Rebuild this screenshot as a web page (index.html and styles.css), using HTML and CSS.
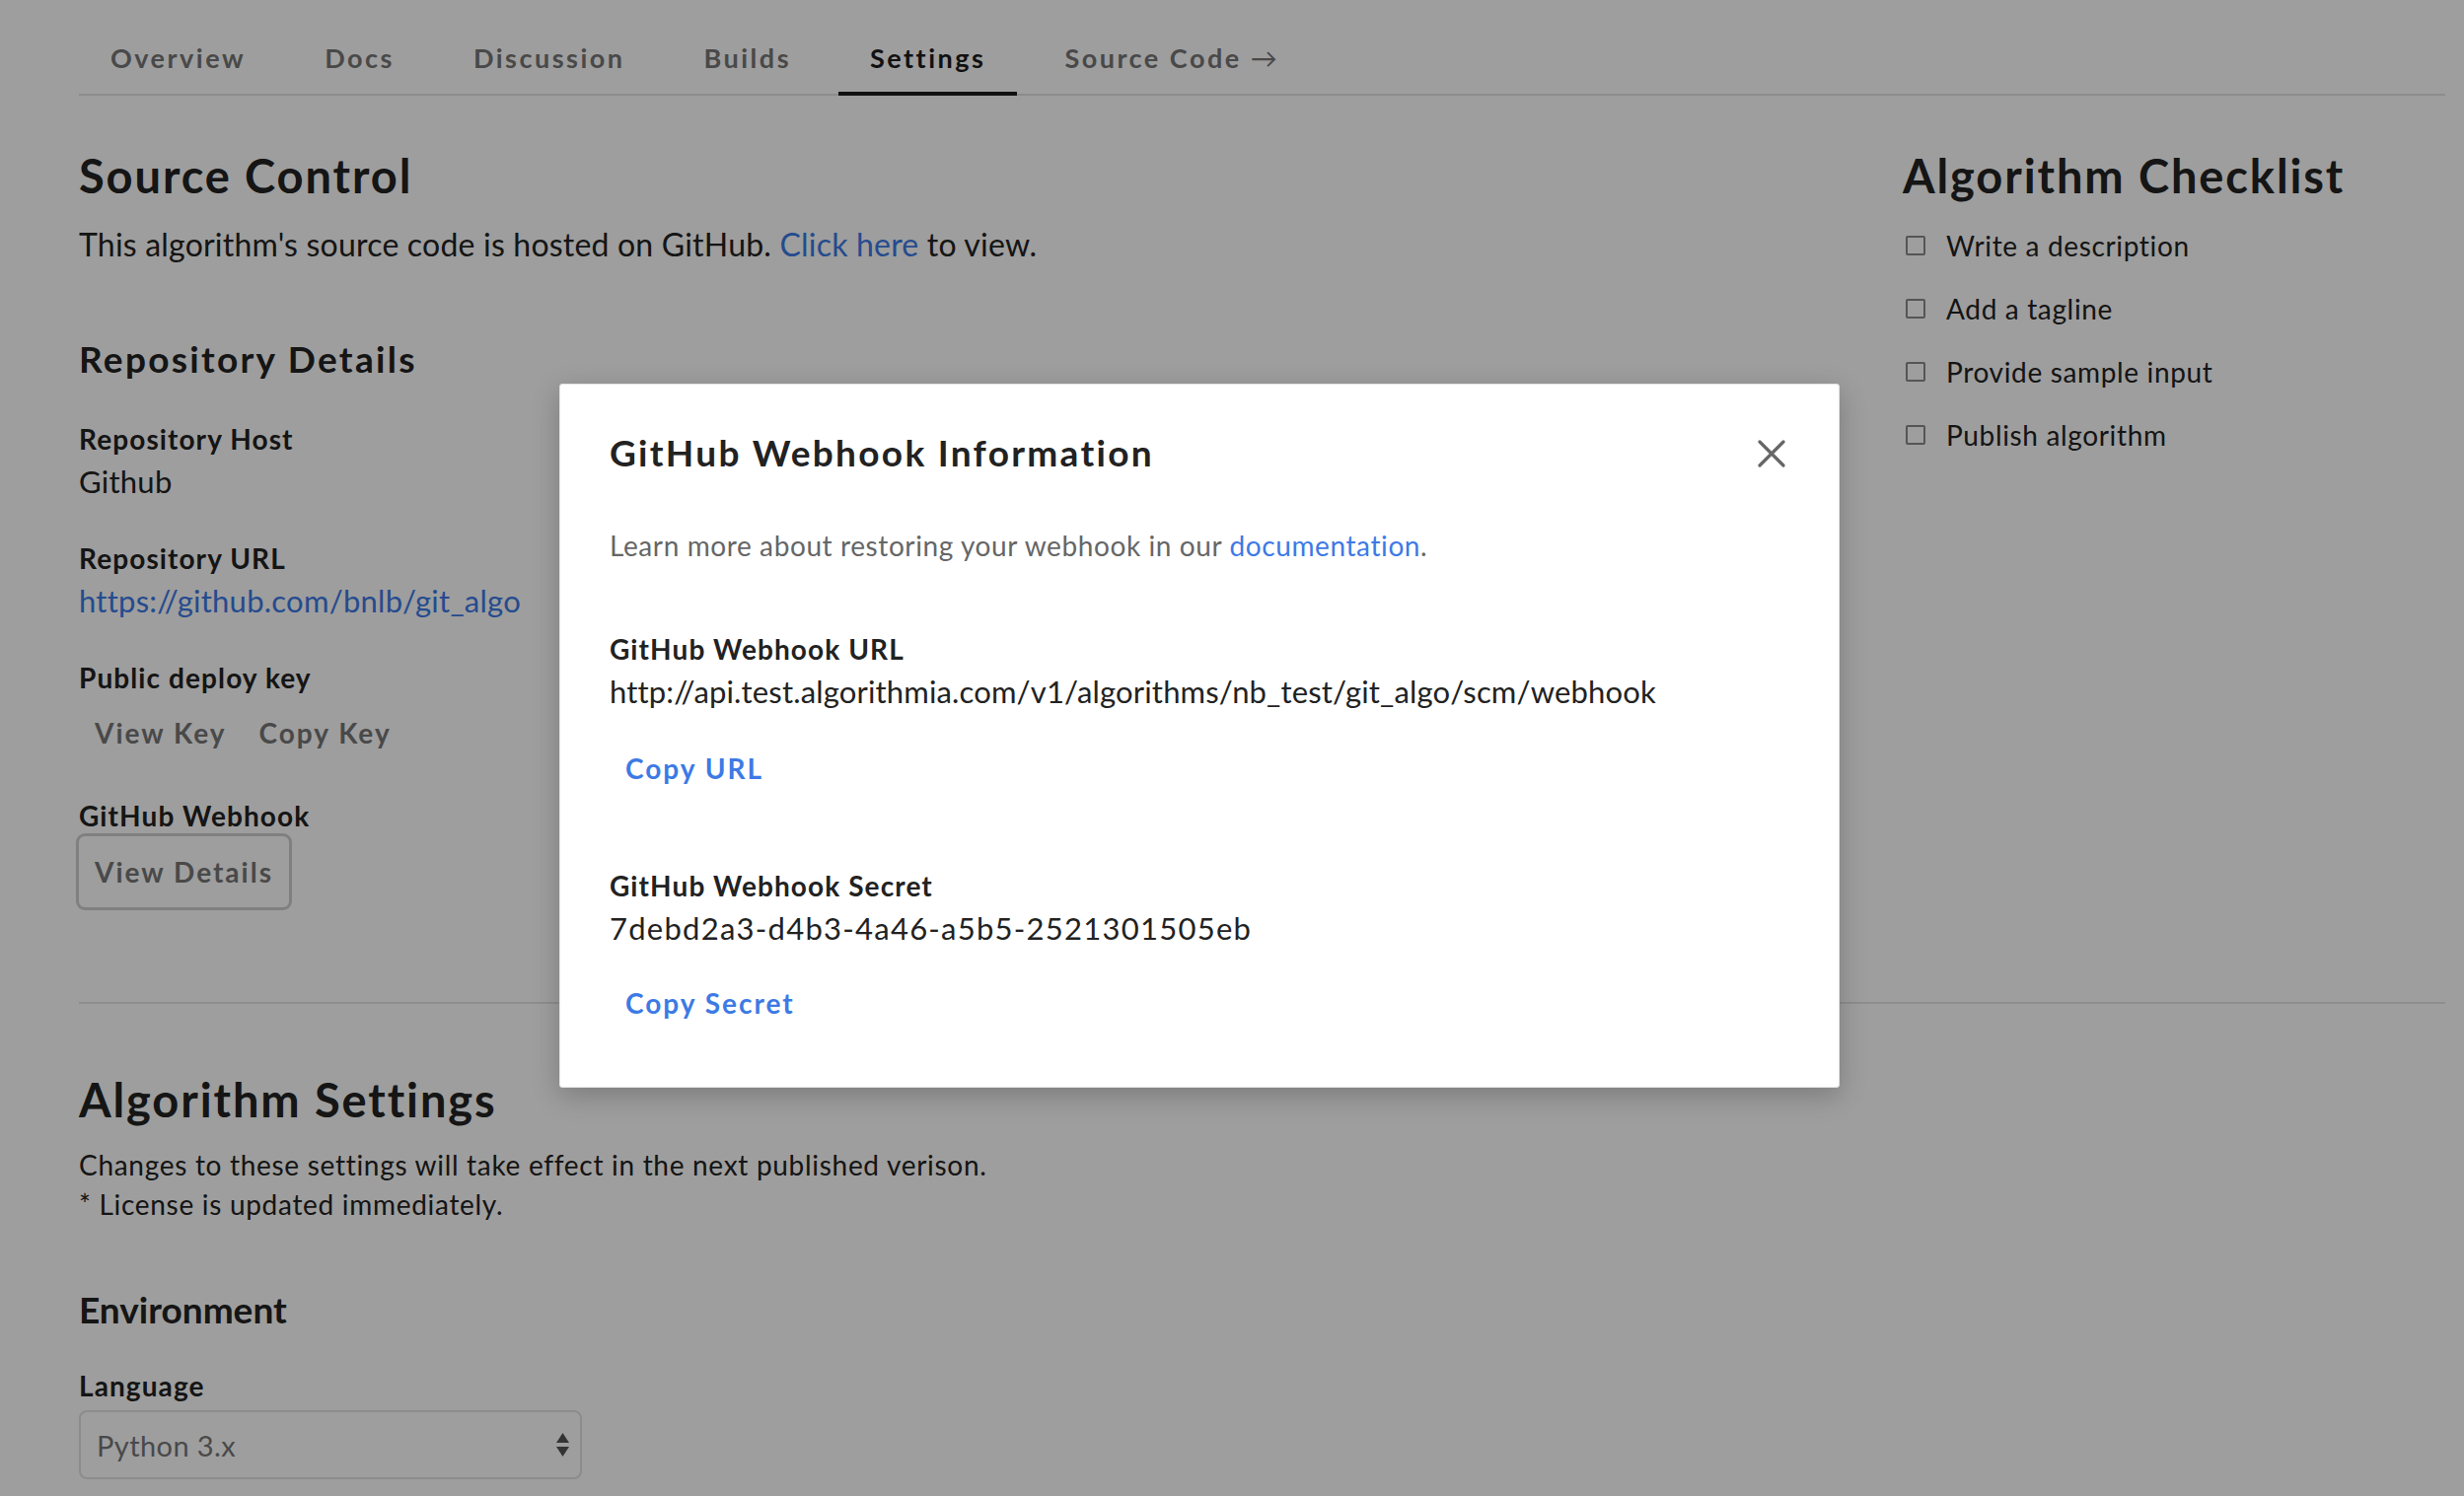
FILE: index.html
```html
<!DOCTYPE html>
<html lang="en">
<head>
<meta charset="utf-8">
<title>Settings</title>
<link rel="stylesheet" href="styles.css">
</head>
<body>
<div class="page">
  <nav class="tabs">
    <a class="tab">Overview</a>
    <a class="tab">Docs</a>
    <a class="tab">Discussion</a>
    <a class="tab">Builds</a>
    <a class="tab active">Settings</a>
    <a class="tab">Source Code <span class="arrow">&#8594;</span></a>
  </nav>

  <div class="top-row">
    <section class="main-col">
      <h2 class="h-xl first">Source Control</h2>
      <p class="lead">This algorithm's source code is hosted on GitHub. <a class="link">Click here</a> to view.</p>

      <h3 class="h-lg repo-title">Repository Details</h3>

      <div class="field">
        <div class="label">Repository Host</div>
        <div class="value">Github</div>
      </div>
      <div class="field">
        <div class="label">Repository URL</div>
        <div class="value"><a class="link">https://github.com/bnlb/git_algo</a></div>
      </div>
      <div class="field">
        <div class="label">Public deploy key</div>
        <div class="btn-row">
          <button class="btn">View Key</button>
          <button class="btn">Copy Key</button>
        </div>
      </div>
      <div class="field webhook">
        <div class="label">GitHub Webhook</div>
        <div class="btn-row">
          <button class="btn focused">View Details</button>
        </div>
      </div>
    </section>

    <aside class="side-col">
      <h2 class="h-xl first">Algorithm Checklist</h2>
      <ul class="checklist">
        <li><span class="box"></span>Write a description</li>
        <li><span class="box"></span>Add a tagline</li>
        <li><span class="box"></span>Provide sample input</li>
        <li><span class="box"></span>Publish algorithm</li>
      </ul>
    </aside>
  </div>

  <hr class="divider">

  <section class="settings">
    <h2 class="h-xl">Algorithm Settings</h2>
    <p class="note">Changes to these settings will take effect in the next published verison.<br>* License is updated immediately.</p>
    <h3 class="h-lg env-title">Environment</h3>
    <div class="label lang-label">Language</div>
    <div class="select">
      <span>Python 3.x</span>
      <svg class="updown" width="13" height="24" viewBox="0 0 13 24"><path d="M6.5 0 L13 10 L0 10 Z" fill="#555"/><path d="M0 14 L13 14 L6.5 24 Z" fill="#555"/></svg>
    </div>
  </section>
</div>

<div class="overlay"></div>

<div class="modal">
  <div class="modal-head">
    <h2 class="modal-title">GitHub Webhook Information</h2>
    <svg class="close" width="28" height="28" viewBox="0 0 28 28"><path d="M2 2 L26 26 M26 2 L2 26" stroke="#666" stroke-width="3.2" stroke-linecap="round"/></svg>
  </div>
  <p class="modal-intro">Learn more about restoring your webhook in our <a class="link">documentation</a>.</p>

  <div class="modal-field">
    <div class="label">GitHub Webhook URL</div>
    <div class="value url">http://api.test.algorithmia.com/v1/algorithms/nb_test/git_algo/scm/webhook</div>
    <button class="btn blue">Copy URL</button>
  </div>

  <div class="modal-field second">
    <div class="label">GitHub Webhook Secret</div>
    <div class="value secret">7debd2a3-d4b3-4a46-a5b5-2521301505eb</div>
    <button class="btn blue">Copy Secret</button>
  </div>
</div>
</body>
</html>
```

FILE: styles.css
```css
html, body {
  margin: 0;
  padding: 0;
  background: #ffffff;
}

body {
  font-family: Lato, "Open Sans", sans-serif;
  color: #222222;
  width: 2498px;
  height: 1517px;
  overflow: hidden;
  position: relative;
}

.page {
  margin-left: 80px;
  width: 2399px;
}

/* Tabs */
.tabs {
  display: flex;
  padding-top: 45px;
  border-bottom: 2px solid #e2e2e2;
}

.tab {
  font-size: 27px;
  font-weight: 700;
  letter-spacing: 2.5px;
  line-height: 28px;
  color: #767676;
  padding: 0 32px 20px;
  margin-right: 16px;
  margin-bottom: -2px;
  border-bottom: 4px solid transparent;
  white-space: nowrap;
}

.tab.active {
  color: #1c1c1c;
  border-bottom-color: #1c1c1c;
}

.arrow {
  font-weight: 400;
  letter-spacing: 0;
}

/* Layout */
.top-row {
  display: flex;
}

.main-col {
  flex: 1;
}

.side-col {
  width: 550px;
}

.h-xl {
  font-size: 47px;
  font-weight: 700;
  letter-spacing: 1.9px;
  line-height: 54px;
  margin: 0;
  color: #222;
}

.h-xl.first {
  margin-top: 54px;
}

.h-lg {
  font-size: 37px;
  font-weight: 700;
  line-height: 44px;
  margin: 0;
  color: #222;
}

.lead {
  font-size: 32px;
  letter-spacing: 0.2px;
  line-height: 44px;
  margin: 21px 0 0;
}

.link {
  color: #3d7ae5;
  text-decoration: none;
}

.repo-title {
  margin-top: 72px;
  letter-spacing: 2.3px;
}

.label {
  font-size: 28px;
  font-weight: 700;
  letter-spacing: 1.1px;
  line-height: 36px;
  color: #222;
}

.value {
  font-size: 31px;
  letter-spacing: 0.25px;
  line-height: 40px;
  margin-top: 5px;
}

.value.url {
  letter-spacing: 0.16px;
}

.value.secret {
  letter-spacing: 1.25px;
}

.field {
  margin-top: 40px;
}

.field:first-of-type {
  margin-top: 41px;
}

.btn-row {
  display: flex;
  margin-top: 2px;
}

.btn {
  font-family: inherit;
  font-size: 28px;
  font-weight: 700;
  letter-spacing: 2px;
  line-height: 72px;
  height: 72px;
  padding: 0 16px;
  border: 0;
  border-radius: 6px;
  background: transparent;
  color: #777;
  margin-right: 1px;
}

.btn.focused {
  box-shadow: 0 0 0 3px #cfcfcf;
}

.webhook {
  margin-top: 30px;
}

.webhook .btn-row {
  margin-top: 3px;
}

/* Checklist */
.checklist {
  list-style: none;
  margin: 12px 0 0;
  padding: 0;
}

.checklist li {
  display: flex;
  align-items: center;
  font-size: 28px;
  letter-spacing: 0.65px;
  line-height: 40px;
  height: 64px;
  color: #222;
}

.box {
  width: 16px;
  height: 16px;
  border: 2px solid #8a8a8a;
  border-radius: 2px;
  margin: 0 21px 0 3px;
}

.divider {
  border: 0;
  border-top: 2px solid #e6e6e6;
  margin: 96px 0 0;
}

/* Settings */
.settings .h-xl {
  margin-top: 70px;
}

.note {
  font-size: 28px;
  letter-spacing: 0.7px;
  line-height: 40px;
  margin: 19px 0 0;
}

.env-title {
  margin-top: 65px;
}

.lang-label {
  margin-top: 37px;
}

.select {
  box-sizing: border-box;
  width: 510px;
  height: 70px;
  margin-top: 7px;
  border: 2px solid #e2e2e2;
  border-radius: 8px;
  display: flex;
  align-items: center;
  justify-content: space-between;
  padding: 0 11px 0 16px;
  font-size: 29px;
  letter-spacing: 0.4px;
  color: #777;
}

/* Overlay & modal */
.overlay {
  position: absolute;
  inset: 0;
  background: rgba(0, 0, 0, 0.38);
}

.modal {
  position: absolute;
  left: 567px;
  top: 389px;
  width: 1298px;
  height: 714px;
  box-sizing: border-box;
  padding: 47px 50px 0;
  background: #fff;
  border: 1px solid #e4e4e4;
  border-radius: 3px;
  box-shadow: 0 8px 28px rgba(0, 0, 0, 0.22);
}

.modal-head {
  display: flex;
  justify-content: space-between;
  align-items: flex-start;
}

.modal-title {
  font-size: 37px;
  font-weight: 700;
  letter-spacing: 2.3px;
  line-height: 44px;
  margin: 0;
  color: #222;
}

.close {
  margin-top: 9px;
  margin-right: 4px;
}

.modal-intro {
  font-size: 28px;
  letter-spacing: 0.6px;
  line-height: 40px;
  color: #666;
  margin: 52px 0 0;
}

.modal-field {
  margin-top: 67px;
}

.modal-field .value {
  margin-top: 5px;
}

.modal-field .btn {
  display: block;
  margin-top: 22px;
}

.modal-field.second {
  margin-top: 65px;
}

.modal-field.second .btn {
  margin-top: 20px;
}

.btn.blue {
  color: #3d7ae5;
}
```
